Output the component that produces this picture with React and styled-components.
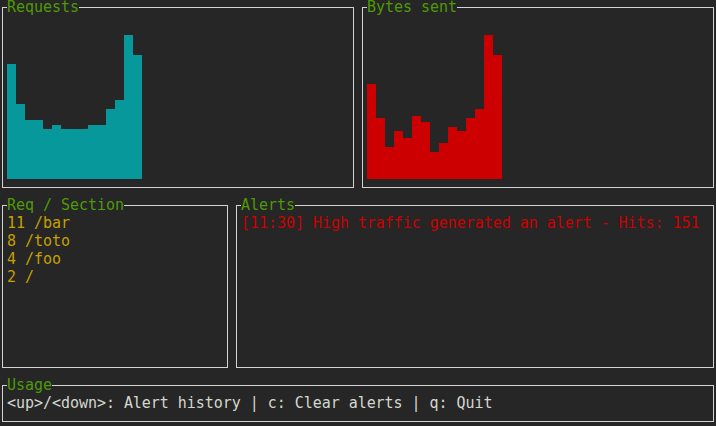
import React from "react";
import styled, { createGlobalStyle } from "styled-components";

const Global = createGlobalStyle`
  html, body { margin: 0; padding: 0; background: #262626; }
  body { font-family: "DejaVu Sans Mono", "Liberation Mono", monospace; font-size: 15px; line-height: 18px; }
`;

const Screen = styled.div`
  width: 716px;
  height: 426px;
  box-sizing: border-box;
  padding: 7px 2px 0 2px;
  display: grid;
  grid-template-rows: 181px 163px 37px;
  row-gap: 17px;
  background: #262626;
  overflow: hidden;
`;

const Row = styled.div`
  display: grid;
  grid-template-columns: ${(p) => p.$cols};
  column-gap: 8px;
  min-height: 0;
`;

const Box = styled.section`
  position: relative;
  box-sizing: border-box;
  border: 1px solid #d3d3d3;
  min-width: 0;
  min-height: 0;
  padding: 8px 4px 0 4px;
`;

const Title = styled.span`
  position: absolute;
  top: -8px;
  left: 4px;
  line-height: 14px;
  background: #262626;
  color: #4e9a06;
  white-space: pre;
  letter-spacing: -0.04px;
`;

const Chart = styled(Box)`
  display: flex;
  align-items: flex-end;
  padding: 0 0 8px 4px;
`;

const Bar = styled.div`
  width: 9px;
  flex: none;
  background: ${(p) => p.$color};
`;

const Line = styled.div`
  color: ${(p) => p.$color};
  white-space: pre;
  height: 18px;
  letter-spacing: -0.04px;
`;

const requests = [115, 75, 59, 59, 50, 54, 50, 50, 50, 54, 54, 70, 79, 144, 124];
const bytes = [95, 61, 32, 48, 41, 63, 57, 27, 36, 52, 48, 61, 70, 144, 124];

const sections = ["11 /bar", "8 /toto", "4 /foo", "2 /"];

export default function App() {
  return (
    <>
      <Global />
      <Screen>
        <Row $cols="352px 352px">
          <Chart>
            <Title>Requests</Title>
            {requests.map((h, i) => (
              <Bar key={i} $color="#06989a" style={{ height: h }} />
            ))}
          </Chart>
          <Chart>
            <Title>Bytes sent</Title>
            {bytes.map((h, i) => (
              <Bar key={i} $color="#cc0000" style={{ height: h }} />
            ))}
          </Chart>
        </Row>
        <Row $cols="226px 478px">
          <Box>
            <Title>Req / Section</Title>
            {sections.map((s) => (
              <Line key={s} $color="#c4a000">{s}</Line>
            ))}
          </Box>
          <Box>
            <Title>Alerts</Title>
            <Line $color="#cc0000">[11:30] High traffic generated an alert - Hits: 151</Line>
          </Box>
        </Row>
        <Row $cols="712px">
          <Box>
            <Title>Usage</Title>
            <Line $color="#d3d7cf">{"<up>/<down>: Alert history | c: Clear alerts | q: Quit"}</Line>
          </Box>
        </Row>
      </Screen>
    </>
  );
}
